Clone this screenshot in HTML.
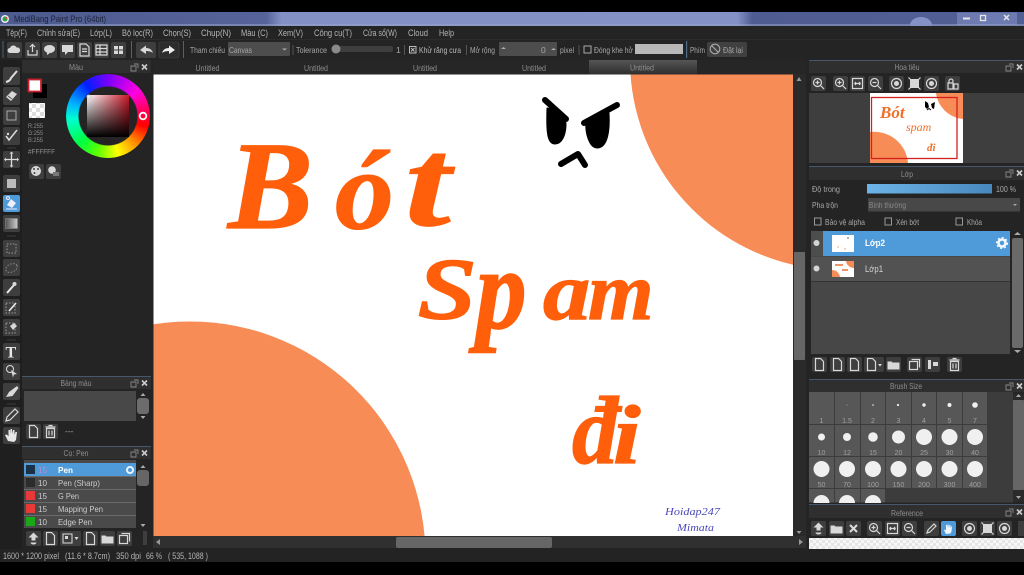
<!DOCTYPE html>
<html><head><meta charset="utf-8">
<style>
html,body{margin:0;padding:0;background:#000;width:1024px;height:575px;overflow:hidden}
svg{display:block;position:absolute;left:0;top:0}
text{font-family:"Liberation Sans","Noto Sans CJK JP",sans-serif;font-size:8.5px;fill:#a8a8a8}
.m text{fill:#b4b4b4;font-size:8.8px}
.hd{fill:#8e8e8e;text-anchor:middle}
.ink text{font-family:"Liberation Serif",serif;font-style:italic;font-weight:bold;fill:#ff5f0a;stroke:#ff5f0a;stroke-width:1.2}
.b{fill:#3e3e3e}
.ic{fill:#d8d8d8}
.st{fill:none;stroke:#d8d8d8;stroke-width:1.2}
.lb{fill:#a0a0a0;font-size:7px;text-anchor:middle}
.s{font-size:8.8px;fill:#b4b4b4}
#wheel{position:absolute;left:66px;top:74px;width:84px;height:84px;border-radius:50%;
background:conic-gradient(#7a00ff 0deg,#ff00e0 50deg,#ff0060 80deg,#ff0000 105deg,#ff9000 135deg,#ffff00 165deg,#60ff00 195deg,#00ff40 225deg,#00ffd0 265deg,#00b0ff 290deg,#0020ff 325deg,#7a00ff 360deg);
-webkit-mask:radial-gradient(circle,transparent 29px,#000 30px);mask:radial-gradient(circle,transparent 29px,#000 30px)}
#sq{position:absolute;left:87px;top:95px;width:42px;height:42px;background:linear-gradient(to bottom,rgba(0,0,0,0),#000),linear-gradient(to right,#fff,#c81828)}
</style></head><body>
<svg width="1024" height="575" viewBox="0 0 1024 575" xmlns="http://www.w3.org/2000/svg">
<defs>
<linearGradient id="tb" x1="0" x2="1" y1="0" y2="0"><stop offset="0" stop-color="#4e5b8e"/><stop offset=".26" stop-color="#56639a"/><stop offset=".275" stop-color="#8290c6"/><stop offset=".72" stop-color="#8391c6"/><stop offset=".735" stop-color="#4f5c92"/><stop offset="1" stop-color="#525f94"/></linearGradient>
<linearGradient id="bar" x1="0" x2="1" y1="0" y2="0"><stop offset="0" stop-color="#6cb4e8"/><stop offset="1" stop-color="#4888bd"/></linearGradient>
<linearGradient id="tabg" x1="0" x2="0" y1="0" y2="1"><stop offset="0" stop-color="#555"/><stop offset="1" stop-color="#2e2e2e"/></linearGradient>
<linearGradient id="grad" x1="0" x2="1" y1="0" y2="0"><stop offset="0" stop-color="#555"/><stop offset="1" stop-color="#ccc"/></linearGradient>
<pattern id="chk" width="8" height="8" patternUnits="userSpaceOnUse"><rect width="8" height="8" fill="#fff"/><rect width="4" height="4" fill="#ddd"/><rect x="4" y="4" width="4" height="4" fill="#ddd"/></pattern>
<pattern id="chk2" width="6" height="6" patternUnits="userSpaceOnUse"><rect width="6" height="6" fill="#f6f6f6"/><rect width="3" height="3" fill="#e6e6e6"/><rect x="3" y="3" width="3" height="3" fill="#e6e6e6"/></pattern>
<g id="doc"><path d="M4 2h5l3 3v9H4z" class="st"/></g>
<g id="folder"><path d="M2 5h4l1 1h7v7H2z" class="ic"/></g>
<g id="zoomi"><circle cx="7" cy="7" r="4" class="st"/><path d="M10 10l3.500 3.500M5 7h4M7 5v4" class="st"/></g>
<g id="zoomo"><circle cx="7" cy="7" r="4" class="st"/><path d="M10 10l3.500 3.500M5 7h4" class="st"/></g>
<g id="fit"><rect x="3" y="3" width="10" height="10" class="st"/><path d="M5 8h6M5 8l1.500-1.500M5 8l1.500 1.500M11 8l-1.500-1.500M11 8l-1.500 1.500" class="st"/></g>
<g id="rot"><circle cx="8" cy="8" r="5" class="st" stroke-width="1.800"/><circle cx="8" cy="8" r="2.500" class="ic"/></g>
<g id="full"><rect x="3.500" y="3.500" width="9" height="9" class="ic"/><path d="M2 2l3 3M14 2l-3 3M2 14l3-3M14 14l-3-3" class="st"/></g>
<g id="trash"><path d="M4 5h8v9H4zM3 3.500h10M6 2h4" class="st"/><path d="M6.500 7v5M9.500 7v5" class="st"/></g>
<g id="x"><path d="M4.500 4.500l7 7M11.500 4.500l-7 7" stroke="#ddd" stroke-width="2"/></g>
<g id="close"><path d="M0 0l5 5M5 0l-5 5" stroke="#ccc" stroke-width="1.600"/></g>
<g id="pop"><path d="M0 2h5v5h-5z M3 0h4v4" fill="none" stroke="#888" stroke-width=".9"/></g>
<g id="up"><path d="M8 2l5 5h-3v3h-4V7H3zM5 12a3 2 0 0 0 6 0z" class="ic"/></g>
<g id="copy"><rect x="3" y="5" width="8" height="8" class="st"/><path d="M5 3h8v8" class="st"/></g>
</defs>

<rect width="1024" height="575" fill="#000"/>
<rect y="12" width="1024" height="14" fill="url(#tb)"/>
<rect y="24.500" width="1024" height="1" fill="#9aa6cf"/>
<ellipse cx="921" cy="25" rx="11" ry="8" fill="#8391c6"/>
<rect x="957" y="12.500" width="60" height="12" fill="#6d7bb0"/>
<rect y="26" width="1024" height="523" fill="#242424"/>
<rect y="549" width="1024" height="13" fill="#232323"/>
<rect y="562" width="1024" height="13" fill="#000"/>

<!-- title -->
<circle cx="5" cy="19" r="4" fill="#e8e8e8"/><circle cx="5" cy="19" r="2.500" fill="#2f9d50"/><path d="M5 16.500a2.500 2.500 0 0 1 2.500 2.500H5z" fill="#e05030"/>
<text x="14" y="22" textLength="92" lengthAdjust="spacingAndGlyphs" style="font-size:9.300px;fill:#1d2238">MediBang Paint Pro (64bit)</text>
<rect x="963" y="17.500" width="7" height="2" fill="#e6e6e6"/>
<rect x="980.500" y="15.500" width="5" height="5" fill="none" stroke="#e6e6e6" stroke-width="1.300"/>
<path d="M1004 15l5 5M1009 15l-5 5" stroke="#e6e6e6" stroke-width="1.500"/>

<!-- menu -->
<g class="m">
<text x="6" y="36" textLength="21" lengthAdjust="spacingAndGlyphs">Tệp(F)</text>
<text x="37" y="36" textLength="43" lengthAdjust="spacingAndGlyphs">Chỉnh sửa(E)</text>
<text x="90" y="36" textLength="22" lengthAdjust="spacingAndGlyphs">Lớp(L)</text>
<text x="122" y="36" textLength="31" lengthAdjust="spacingAndGlyphs">Bộ lọc(R)</text>
<text x="163" y="36" textLength="28" lengthAdjust="spacingAndGlyphs">Chọn(S)</text>
<text x="201" y="36" textLength="30" lengthAdjust="spacingAndGlyphs">Chụp(N)</text>
<text x="241" y="36" textLength="27" lengthAdjust="spacingAndGlyphs">Màu (C)</text>
<text x="278" y="36" textLength="25" lengthAdjust="spacingAndGlyphs">Xem(V)</text>
<text x="314" y="36" textLength="38" lengthAdjust="spacingAndGlyphs">Công cụ(T)</text>
<text x="363" y="36" textLength="34" lengthAdjust="spacingAndGlyphs">Cửa sổ(W)</text>
<text x="408" y="36" textLength="20" lengthAdjust="spacingAndGlyphs">Cloud</text>
<text x="439" y="36" textLength="15" lengthAdjust="spacingAndGlyphs">Help</text>
</g>
<rect y="39" width="1024" height="1" fill="#2c2c2c"/>

<!-- toolbar -->
<rect x="2.500" y="41" width="1" height="17" fill="#4a6478"/>
<g>
<rect class="b" x="7" y="42" width="15" height="16" rx="2"/><path d="M10 53a2.500 2.500 0 0 1 0-5 3.500 3.500 0 0 1 6.500-.5 2.800 2.800 0 0 1 1.500 5.500z" class="ic"/>
<rect class="b" x="25" y="42" width="15" height="16" rx="2"/><path d="M28 50v5h9v-5M32.500 52v-7M30 47l2.500-2.500L35 47" class="st"/>
<rect class="b" x="42" y="42" width="15" height="16" rx="2"/><ellipse cx="49.500" cy="49" rx="5.500" ry="4" class="ic"/><path d="M47 52v3l3-2z" class="ic"/>
<rect class="b" x="60" y="42" width="15" height="16" rx="2"/><rect x="62" y="45" width="11" height="7" class="ic"/><path d="M65 52v3l3-3z" class="ic"/>
<rect class="b" x="77" y="42" width="15" height="16" rx="2"/><path d="M80 44h6l3 3v9h-9zM82 49h5M82 51.500h5" class="st"/>
<rect class="b" x="94" y="42" width="15" height="16" rx="2"/><path d="M96 45h11v10H96zM96 48.500h11M96 52h11M100 45v10" class="st"/>
<rect class="b" x="111" y="42" width="15" height="16" rx="2"/><rect x="114" y="46" width="4" height="3.500" class="ic"/><rect x="119" y="46" width="4" height="3.500" class="ic"/><rect x="114" y="50.500" width="4" height="3.500" class="ic"/><rect x="119" y="50.500" width="4" height="3.500" class="ic"/>
</g>
<rect x="131" y="41" width="1" height="17" fill="#4a6478"/>
<rect class="b" x="136" y="42" width="20" height="16" rx="2"/><path d="M140 50l6-4.500v2.500c4 0 6 2 7 5-2-1.500-4-2-7-2v3z" class="ic"/>
<rect x="159" y="42" width="20" height="16" rx="2" fill="#2d2d2d" stroke="#444" stroke-width=".6"/><path d="M175 50l-6-4.500v2.500c-4 0-6 2-7 5 2-1.500 4-2 7-2v3z" fill="#eee"/>
<rect x="183" y="41" width="1" height="17" fill="#4a6478"/>
<text x="190" y="53" textLength="35" lengthAdjust="spacingAndGlyphs">Tham chiếu</text>
<rect x="228" y="42" width="62" height="14" fill="#4d4d4d" rx="1"/><text x="229" y="53" textLength="23" lengthAdjust="spacingAndGlyphs">Canvas</text><path d="M282 48.500h5l-2.500 2z" fill="#aaa"/>
<rect x="292.500" y="45" width="1" height="10" fill="#555"/>
<text x="296" y="53" textLength="31" lengthAdjust="spacingAndGlyphs">Tolerance</text>
<rect x="332" y="46" width="61" height="6" fill="#3e3e3e" rx="2"/><circle cx="336" cy="49" r="4.500" fill="#8a8a8a"/>
<text x="396" y="53">1</text>
<rect x="404" y="45" width="1" height="10" fill="#555"/>
<rect x="409.500" y="46.500" width="6.500" height="6.500" fill="none" stroke="#bbb"/><path d="M411 48l3.500 3.500M414.500 48L411 51.500" stroke="#bbb"/>
<text x="419" y="53" textLength="42" lengthAdjust="spacingAndGlyphs" style="fill:#bbb">Khử răng cưa</text>
<rect x="466" y="45" width="1" height="10" fill="#555"/>
<text x="470" y="53" textLength="25" lengthAdjust="spacingAndGlyphs">Mở rộng</text>
<rect x="499" y="42" width="58" height="14" fill="#4d4d4d" rx="1"/><text x="541" y="53">0</text><path d="M501 49h5l-2.500-2z M551 50h5l-2.500-2z" fill="#aaa"/>
<text x="560" y="53" textLength="14" lengthAdjust="spacingAndGlyphs">pixel</text>
<rect x="578.500" y="45" width="1" height="10" fill="#555"/>
<rect x="584" y="46" width="7" height="7" fill="none" stroke="#aaa"/>
<text x="594" y="53" textLength="39" lengthAdjust="spacingAndGlyphs">Đóng khe hở</text>
<rect x="635" y="44" width="48" height="10" fill="#b8b8b8"/>
<rect x="686" y="41" width="1.200" height="17" fill="#4a6c88"/>
<text x="690" y="53" textLength="15" lengthAdjust="spacingAndGlyphs">Phím</text>
<rect x="707" y="42" width="40" height="15" fill="#404040" rx="2"/><circle cx="715" cy="49" r="4.800" fill="none" stroke="#aaa" stroke-width="1.100"/><path d="M711.500 45.500l7 7" stroke="#aaa" stroke-width="1.100"/><text x="723" y="53" textLength="20" lengthAdjust="spacingAndGlyphs">Đặt lại</text>

<!-- left tools -->
<rect x="0" y="60" width="22" height="489" fill="#1f1f1f"/>
<g>
<rect class="b" x="3" y="67" width="17" height="18" rx="2"/><path d="M6 82q4-1 5-4l6-7" stroke="#ddd" stroke-width="2" fill="none"/>
<rect class="b" x="3" y="87" width="17" height="18" rx="2"/><path d="M6 97l6-6 5 3-6 7z" class="ic"/><path d="M8 96l4 3" stroke="#555"/>
<rect class="b" x="3" y="107" width="17" height="18" rx="2"/><rect x="7" y="111" width="9" height="9" fill="none" stroke="#aaa"/>
<rect class="b" x="3" y="127" width="17" height="18" rx="2"/><path d="M6 136l3 4 8-10" stroke="#ddd" stroke-width="1.500" fill="none"/><circle cx="8" cy="134" r="1.200" class="ic"/>
<rect class="b" x="3" y="151" width="17" height="17" rx="2"/><path d="M11.500 152.500v14M5 159.500h13" stroke="#ddd" stroke-width="1.300"/><path d="M11.500 151.500l-2 2h4zM11.500 167.500l-2-2h4zM4 159.500l2-2v4zM19 159.500l-2-2v4z" class="ic"/>
<rect class="b" x="3" y="175" width="17" height="17" rx="2"/><rect x="7" y="179" width="9" height="9" fill="#bbb"/>
<rect x="3" y="195" width="17" height="17" rx="2" fill="#4f9ad8"/><path d="M7 205l4-6 5 4-4 5z" fill="#eef"/><circle cx="8" cy="198" r="1.500" fill="none" stroke="#eef"/><path d="M6 209h11" stroke="#eef"/>
<rect class="b" x="3" y="215" width="17" height="17" rx="2"/><rect x="5.500" y="218.500" width="12" height="10" fill="url(#grad)" stroke="#888" stroke-width=".6"/>
<rect class="b" x="3" y="240" width="17" height="17" rx="2"/><rect x="7" y="244" width="9" height="9" fill="none" stroke="#999" stroke-dasharray="1.500 1.500"/>
<rect class="b" x="3" y="259" width="17" height="17" rx="2"/><ellipse cx="11.500" cy="268" rx="6" ry="4" fill="none" stroke="#888" stroke-dasharray="1.500 1.500" transform="rotate(-25 11.500 268)"/>
<rect class="b" x="3" y="279" width="17" height="17" rx="2"/><path d="M7 293l7-8" stroke="#e6e6e6" stroke-width="2"/><circle cx="14.500" cy="284" r="2" class="ic"/>
<rect class="b" x="3" y="299" width="17" height="17" rx="2"/><rect x="6" y="303" width="9" height="10" fill="none" stroke="#999" stroke-dasharray="1.500 1.500"/><path d="M9 311l7-8" stroke="#eee" stroke-width="1.600"/>
<rect class="b" x="3" y="319" width="17" height="17" rx="2"/><rect x="6" y="323" width="9" height="10" fill="none" stroke="#999" stroke-dasharray="1.500 1.500"/><path d="M10 326l4-3 3 3-4 4z" class="ic"/>
<rect class="b" x="3" y="343" width="17" height="17" rx="2"/><text x="5.500" y="357.500" style="font-family:'Liberation Serif',serif;font-weight:bold;font-size:16px;fill:#e6e6e6">T</text>
<rect class="b" x="3" y="363" width="17" height="17" rx="2"/><circle cx="10" cy="369" r="3.500" fill="none" stroke="#ddd"/><path d="M11 370l6 4-3 .5-1 3z" class="ic"/>
<rect class="b" x="3" y="383" width="17" height="17" rx="2"/><path d="M6 397l3-5 8-6 1.500 2-6 8z" class="ic"/>
<rect class="b" x="3" y="407" width="17" height="17" rx="2"/><path d="M6 421l1-4 8-8 3 3-8 8z" fill="none" stroke="#ddd" stroke-width="1.200"/>
<rect class="b" x="3" y="427" width="17" height="17" rx="2"/><path d="M8 441l-3-6 2-.5 1.500 2V430h1.500v4l.5-5h1.500l.5 5 .5-4h1.500v5l1-3h1.500l-1 8-2 2z" fill="#e6e6e6"/>
</g>
<rect x="7" y="147.500" width="9" height="1" fill="#3b3b3b"/><rect x="7" y="235.500" width="9" height="1" fill="#3b3b3b"/><rect x="7" y="339.500" width="9" height="1" fill="#3b3b3b"/><rect x="7" y="403.500" width="9" height="1" fill="#3b3b3b"/>

<!-- left panel: colour -->
<rect x="22" y="60" width="129" height="13" fill="#2f2f2f"/><text class="hd" x="76" y="70" textLength="14" lengthAdjust="spacingAndGlyphs">Màu</text>
<use href="#pop" x="131" y="64"/><use href="#close" x="142" y="64.500"/>
<rect x="33" y="84" width="14" height="14" fill="#000"/>
<rect x="28.500" y="79.500" width="12.500" height="12" fill="#fff" stroke="#c8202c" stroke-width="1.800"/>
<rect x="29" y="103" width="16" height="15" fill="url(#chk)"/>
<text x="28" y="128" textLength="15" lengthAdjust="spacingAndGlyphs" style="font-size:6.800px;fill:#8e8e8e">R:255</text><text x="28" y="135" textLength="15" lengthAdjust="spacingAndGlyphs" style="font-size:6.800px;fill:#8e8e8e">G:255</text><text x="28" y="142" textLength="15" lengthAdjust="spacingAndGlyphs" style="font-size:6.800px;fill:#8e8e8e">B:255</text>
<text x="28" y="154" textLength="27" lengthAdjust="spacingAndGlyphs" style="font-size:7.500px;fill:#8e8e8e">#FFFFFF</text>
<rect class="b" x="29" y="164" width="15" height="15" rx="2"/><circle cx="36" cy="171" r="5" class="ic"/><circle cx="34" cy="169" r="1" fill="#444"/><circle cx="38" cy="169" r="1" fill="#444"/><circle cx="34.500" cy="173" r="1" fill="#444"/>
<rect class="b" x="46" y="164" width="15" height="15" rx="2"/><circle cx="52" cy="170" r="3.800" class="ic"/><rect x="53" y="172" width="6" height="4" fill="#777"/>

<!-- palette panel -->
<rect x="22" y="376" width="129" height="13" fill="#2f2f2f"/><rect x="22" y="376" width="129" height="1" fill="#46586a"/><text class="hd" x="76" y="386" textLength="31" lengthAdjust="spacingAndGlyphs">Bảng màu</text>
<use href="#pop" x="131" y="380"/><use href="#close" x="142" y="380.500"/>
<rect x="24" y="391" width="112" height="30" fill="#484848"/>
<rect x="137" y="398" width="12" height="16" rx="3" fill="#6c6c6c"/><path d="M140.500 396l2.500-3 2.500 3zM140.500 416l2.500 3 2.500-3z" fill="#aaa"/>
<rect class="b" x="26" y="424" width="15" height="15" rx="2"/><use href="#doc" x="25.500" y="423.500"/>
<rect class="b" x="43" y="424" width="15" height="15" rx="2"/><use href="#trash" x="42.500" y="423.500"/>
<text x="65" y="434">---</text>

<!-- brush panel -->
<rect x="22" y="446" width="129" height="13" fill="#2f2f2f"/><rect x="22" y="446" width="129" height="1" fill="#46586a"/><text class="hd" x="76" y="456" textLength="25" lengthAdjust="spacingAndGlyphs">Cọ: Pen</text>
<use href="#pop" x="131" y="450"/><use href="#close" x="142" y="450.500"/>
<rect x="24" y="460" width="112" height="68" fill="#4a4a4a"/>
<rect x="24" y="463" width="112" height="13" fill="#4f9ad8"/>
<rect x="24" y="476" width="112" height="1" fill="#6a6a6a"/><rect x="24" y="489" width="112" height="1" fill="#6a6a6a"/><rect x="24" y="502" width="112" height="1" fill="#6a6a6a"/><rect x="24" y="515" width="112" height="1" fill="#6a6a6a"/>
<rect x="26" y="465" width="9" height="9" fill="#1b3145"/><rect x="26" y="478" width="9" height="9" fill="#2c2c2c"/><rect x="26" y="491" width="9" height="9" fill="#e83838"/><rect x="26" y="504" width="9" height="9" fill="#e83838"/><rect x="26" y="517" width="9" height="9" fill="#18a818"/>
<text x="38" y="473" textLength="9" lengthAdjust="spacingAndGlyphs" style="fill:#c78ac8">15</text><text x="58" y="473" textLength="15" lengthAdjust="spacingAndGlyphs" style="fill:#fff;font-weight:bold">Pen</text>
<text x="38" y="486" textLength="9" lengthAdjust="spacingAndGlyphs" style="fill:#ccc">10</text><text x="58" y="486" textLength="42" lengthAdjust="spacingAndGlyphs" style="fill:#ccc">Pen (Sharp)</text>
<text x="38" y="499" textLength="9" lengthAdjust="spacingAndGlyphs" style="fill:#ccc">15</text><text x="58" y="499" textLength="21" lengthAdjust="spacingAndGlyphs" style="fill:#ccc">G Pen</text>
<text x="38" y="512" textLength="9" lengthAdjust="spacingAndGlyphs" style="fill:#ccc">15</text><text x="58" y="512" textLength="45" lengthAdjust="spacingAndGlyphs" style="fill:#ccc">Mapping Pen</text>
<text x="38" y="525" textLength="9" lengthAdjust="spacingAndGlyphs" style="fill:#ccc">10</text><text x="58" y="525" textLength="34" lengthAdjust="spacingAndGlyphs" style="fill:#ccc">Edge Pen</text>
<circle cx="130" cy="470" r="3" fill="none" stroke="#eaf4ff" stroke-width="2"/>
<rect x="137" y="470" width="12" height="16" rx="3" fill="#666"/><path d="M140.500 468l2.500-3 2.500 3zM140.500 524l2.500 3 2.500-3z" fill="#aaa"/>
<rect class="b" x="26" y="531" width="15" height="15" rx="2"/><use href="#up" x="25.500" y="530.500"/>
<rect class="b" x="43" y="531" width="15" height="15" rx="2"/><use href="#doc" x="42.500" y="530.500"/>
<rect class="b" x="60" y="531" width="21" height="15" rx="2"/><rect x="63" y="534" width="9" height="9" fill="none" stroke="#ddd"/><rect x="65" y="536" width="3" height="3" class="ic"/><path d="M74.500 537h4l-2 3z" class="ic"/>
<rect class="b" x="83" y="531" width="15" height="15" rx="2"/><use href="#doc" x="82.500" y="530.500"/>
<rect class="b" x="100" y="531" width="15" height="15" rx="2"/><use href="#folder" x="99.500" y="530.500"/>
<rect class="b" x="117" y="531" width="15" height="15" rx="2"/><use href="#copy" x="116.500" y="530.500"/>
<rect x="143" y="531" width="4" height="14" fill="#3e3e3e"/>

<!-- tabs -->
<rect x="153" y="60" width="653" height="14.500" fill="#262626"/>
<rect x="589" y="60" width="108" height="14.500" fill="url(#tabg)"/>
<text class="hd" x="207.500" y="71" textLength="24" lengthAdjust="spacingAndGlyphs">Untitled</text><text class="hd" x="316" y="71" textLength="24" lengthAdjust="spacingAndGlyphs">Untitled</text><text class="hd" x="425" y="71" textLength="24" lengthAdjust="spacingAndGlyphs">Untitled</text><text class="hd" x="534" y="71" textLength="24" lengthAdjust="spacingAndGlyphs">Untitled</text><text class="hd" x="642" y="70.500" textLength="24" lengthAdjust="spacingAndGlyphs">Untitled</text>

<!-- canvas -->
<rect x="153.500" y="74.500" width="639.500" height="461.500" fill="#fff"/>
<path d="M630.500 74.500A210 210 0 0 0 793 264.700L793 74.500Z" fill="#f88c56"/>
<path d="M153.500 324.300A235.500 235.500 0 0 1 424.600 536L153.500 536Z" fill="#f88c56"/>

<g class="ink">
<text transform="translate(228 228) scale(1.020 1)" style="font-size:125px">B</text>
<text transform="translate(335 228) scale(1.050 1)" style="font-size:112px">ó</text>
<text transform="translate(405 225) scale(1.300 1)" style="font-size:126px">t</text>
<text transform="translate(418 318) scale(1.800 1.450)" style="font-size:84px;font-weight:normal">s</text>
<text transform="translate(476 328) scale(1.150 1.300)" style="font-size:88px">p</text>
<text transform="translate(543 319) scale(1.100 .95)" style="font-size:86px">a</text>
<text transform="translate(588 319) scale(.98 .95)" style="font-size:86px">m</text>
<text transform="translate(572 463) scale(.96 1)" style="font-size:96px">đ</text>
<text transform="translate(613 463) scale(1.180 1)" style="font-size:84px">i</text>
</g>

<!-- angry face drawing -->
<g fill="#000" stroke="#000" stroke-linecap="round" stroke-linejoin="round">
<path d="M545 100L566 119" stroke-width="6" fill="none"/>
<path d="M547 108C553 108 566 118 566 124C566 135 562 144 555 144C548 144 546 135 547 108Z" stroke-width="1"/>
<path d="M617 105L584 123" stroke-width="6" fill="none"/>
<path d="M586 122L609 113C610 130 608 148 597 148C589 148 585 132 586 122Z" stroke-width="1"/>
<path d="M561 164L578 154 585 165" stroke-width="6" fill="none"/>
</g>

<text x="665" y="515" textLength="55" lengthAdjust="spacingAndGlyphs" style="font-family:'Liberation Serif',serif;font-style:italic;font-size:11px;fill:#4a4ab8">Hoidap247</text>
<text x="677" y="531" textLength="37" lengthAdjust="spacingAndGlyphs" style="font-family:'Liberation Serif',serif;font-style:italic;font-size:11px;fill:#4a4ab8">Mimata</text>

<!-- scrollbars -->
<rect x="793" y="74" width="13" height="462" fill="#2a2a2a"/>
<rect x="794" y="252" width="11" height="108" rx="1" fill="#666"/>
<path d="M796.500 81l2.500-4 2.500 4zM796.500 531l2.500 3 2.500-3z" fill="#999"/>
<rect x="153" y="536" width="653" height="12" fill="#303030"/>
<rect x="396" y="537" width="156" height="11" rx="2" fill="#666"/>
<path d="M160 539l-4 3 4 3zM799 539l4 3-4 3z" fill="#999"/>

<!-- right: navigator -->
<rect x="809" y="60" width="215" height="13" fill="#2f2f2f"/><rect x="809" y="60" width="215" height="1" fill="#46586a"/><text class="hd" x="907" y="70" textLength="25" lengthAdjust="spacingAndGlyphs">Hoa tiêu</text>
<use href="#pop" x="1006" y="64"/><use href="#close" x="1017" y="64.500"/>
<g>
<rect class="b" x="811" y="76" width="15" height="15" rx="2"/><use href="#zoomi" x="810.500" y="75.500"/>
<rect class="b" x="833" y="76" width="15" height="15" rx="2"/><use href="#zoomi" x="832.500" y="75.500"/>
<rect class="b" x="850" y="76" width="15" height="15" rx="2"/><use href="#fit" x="849.500" y="75.500"/>
<rect class="b" x="868" y="76" width="15" height="15" rx="2"/><use href="#zoomo" x="867.500" y="75.500"/>
<rect class="b" x="889" y="76" width="15" height="15" rx="2"/><use href="#rot" x="888.500" y="75.500"/>
<rect x="907" y="76" width="15" height="15" rx="2" fill="#2b2b2b"/><use href="#full" x="906.500" y="75.500"/>
<rect class="b" x="924" y="76" width="15" height="15" rx="2"/><use href="#rot" x="923.500" y="75.500"/>
<rect class="b" x="945" y="76" width="15" height="15" rx="2"/><path d="M948 83h5v6h-5zM954 84h4v5h-4zM949 83v-2a2 2 0 0 1 4 0v2" class="st"/>
</g>
<rect x="809" y="93" width="215" height="70" fill="#3e3e3e"/>
<rect x="870" y="93" width="93" height="70" fill="#fff"/>
<path d="M936 93A30 30 0 0 0 963 119V93Z" fill="#f88c56"/>
<path d="M870 132A34 34 0 0 1 908 163H870Z" fill="#f88c56"/>
<text x="880" y="118" style="font-family:'Liberation Serif',serif;font-style:italic;font-weight:bold;font-size:17px;fill:#f0702a">Bót</text>
<text x="906" y="131" style="font-family:'Liberation Serif',serif;font-style:italic;font-size:12px;fill:#f0702a">spam</text>
<text x="927" y="151" style="font-family:'Liberation Serif',serif;font-style:italic;font-weight:bold;font-size:11px;fill:#f0702a">đi</text>
<path d="M925 101l3 2 1 4-2 2-2-2zM935 102l-4 2 1 4 2 1z" fill="#000"/><path d="M927 110l2-1.500 2 1.500" stroke="#000" fill="none"/>
<rect x="871.500" y="97.500" width="85.500" height="61" fill="none" stroke="#d21f1f" stroke-width="1.300"/>

<!-- right: layers -->
<rect x="809" y="166" width="215" height="14" fill="#2f2f2f"/><rect x="809" y="166" width="215" height="1" fill="#46586a"/><text class="hd" x="907" y="177" textLength="12" lengthAdjust="spacingAndGlyphs">Lớp</text>
<use href="#pop" x="1006" y="170"/><use href="#close" x="1017" y="170.500"/>
<text x="812" y="192" textLength="28" lengthAdjust="spacingAndGlyphs">Độ trong</text>
<rect x="867" y="184" width="125" height="9.500" fill="url(#bar)"/>
<text x="996" y="192" textLength="20" lengthAdjust="spacingAndGlyphs">100 %</text>
<text x="812" y="208" textLength="26" lengthAdjust="spacingAndGlyphs">Pha trộn</text>
<rect x="868" y="198" width="152" height="13.500" fill="#484848" rx="1"/><text x="869" y="208" textLength="37" lengthAdjust="spacingAndGlyphs" style="fill:#8c8c8c">Bình thường</text><path d="M1013 204h4l-2 2z" fill="#aaa"/>
<rect x="814.500" y="218" width="6.500" height="7" fill="none" stroke="#999"/><text x="825" y="225" textLength="40" lengthAdjust="spacingAndGlyphs">Bảo vệ alpha</text>
<rect x="885" y="218" width="6.500" height="7" fill="none" stroke="#999"/><text x="896" y="225" textLength="23" lengthAdjust="spacingAndGlyphs">Xén bớt</text>
<rect x="956" y="218" width="6.500" height="7" fill="none" stroke="#999"/><text x="967" y="225" textLength="15" lengthAdjust="spacingAndGlyphs">Khóa</text>
<rect x="811" y="231" width="199" height="123" fill="#474747"/>
<rect x="823" y="231" width="187" height="25" fill="#4f9ad8"/>
<rect x="811" y="231" width="12" height="25" fill="#4d4d4d"/>
<rect x="811" y="257" width="199" height="24" fill="#525252"/>
<rect x="811" y="281" width="199" height="1" fill="#333"/>
<circle cx="816.500" cy="243" r="3" fill="#d4d4d4"/><circle cx="816.500" cy="268.500" r="3" fill="#d4d4d4"/>
<rect x="832" y="235" width="22" height="17" fill="#fff"/><circle cx="848" cy="238" r="1" fill="#999"/><circle cx="838" cy="247" r=".8" fill="#f4a070"/><circle cx="845" cy="249" r=".8" fill="#f4a070"/>
<rect x="832" y="261" width="22" height="16" fill="#fff"/><path d="M832 270A8 8 0 0 1 840 277H832Z" fill="#f88c56"/><path d="M846 261A8 8 0 0 0 854 268V261Z" fill="#f88c56"/><path d="M835 265h8M842 270h6" stroke="#e8703a" stroke-width="1.500"/>
<text x="865" y="246" textLength="20" lengthAdjust="spacingAndGlyphs" style="fill:#fff;font-weight:bold;font-size:8.800px">Lớp2</text>
<text x="865" y="272" textLength="18" lengthAdjust="spacingAndGlyphs" style="fill:#d4d4d4;font-size:8.800px">Lớp1</text>
<circle cx="1002" cy="243" r="3.500" fill="none" stroke="#f4f8ff" stroke-width="2.500"/><circle cx="1002" cy="243" r="5.200" fill="none" stroke="#f4f8ff" stroke-width="1.600" stroke-dasharray="2 2"/>
<rect x="1012" y="238" width="11" height="110" rx="2" fill="#6a6a6a"/><path d="M1014 235l3.500-3 3.500 3zM1014 350l3.500 3 3.500-3z" fill="#aaa"/>
<g>
<rect class="b" x="812" y="357" width="15" height="15" rx="2"/><use href="#doc" x="811.500" y="356.500"/>
<rect class="b" x="830" y="357" width="15" height="15" rx="2"/><use href="#doc" x="829.500" y="356.500"/>
<rect class="b" x="847" y="357" width="15" height="15" rx="2"/><use href="#doc" x="846.500" y="356.500"/>
<rect class="b" x="864" y="357" width="20" height="15" rx="2"/><use href="#doc" x="863.500" y="356.500"/><path d="M878 364h4l-2 2.500z" class="ic"/>
<rect class="b" x="886" y="357" width="15" height="15" rx="2"/><use href="#folder" x="885.500" y="356.500"/>
<rect class="b" x="907" y="357" width="15" height="15" rx="2"/><use href="#copy" x="906.500" y="356.500"/>
<rect class="b" x="925" y="357" width="15" height="15" rx="2"/><rect x="928" y="360" width="3" height="9" class="ic"/><rect x="933" y="362" width="5" height="4" class="ic"/>
<rect class="b" x="947" y="357" width="15" height="15" rx="2"/><use href="#trash" x="946.500" y="356.500"/>
</g>

<!-- right: brush size -->
<rect x="809" y="379" width="215" height="13" fill="#2f2f2f"/><rect x="809" y="379" width="215" height="1" fill="#46586a"/><text class="hd" x="906" y="389" textLength="32" lengthAdjust="spacingAndGlyphs">Brush Size</text>
<use href="#pop" x="1006" y="383"/><use href="#close" x="1017" y="383.500"/>
<rect x="809" y="392" width="204" height="110.500" fill="#3c3c3c"/>
<rect x="809" y="392" width="178" height="96" fill="#575757"/>
<rect x="809" y="488" width="76" height="14.500" fill="#575757"/>
<g fill="#3c3c3c">
<rect x="834" y="392" width="1" height="110"/><rect x="860" y="392" width="1" height="110"/><rect x="885" y="392" width="1" height="96"/><rect x="911" y="392" width="1" height="96"/><rect x="936" y="392" width="1" height="96"/><rect x="962" y="392" width="1" height="96"/>
<rect x="809" y="424" width="178" height="1"/><rect x="809" y="456" width="178" height="1"/><rect x="809" y="488" width="178" height="1"/>
</g>
<g fill="#f0f0f0">
<circle cx="847" cy="405" r=".4"/><circle cx="873" cy="405" r=".8"/><circle cx="898" cy="405" r="1.100"/><circle cx="924" cy="405" r="1.700"/><circle cx="949.500" cy="405" r="2"/><circle cx="975" cy="405" r="2.800"/>
<circle cx="821.500" cy="437" r="3.500"/><circle cx="847" cy="437" r="4"/><circle cx="873" cy="437" r="4.800"/><circle cx="898.500" cy="437" r="6.500"/><circle cx="924" cy="437" r="8"/><circle cx="949.500" cy="437" r="8"/><circle cx="975" cy="437" r="8"/>
<circle cx="821.500" cy="469" r="8"/><circle cx="847" cy="469" r="8"/><circle cx="873" cy="469" r="8"/><circle cx="898.500" cy="469" r="8"/><circle cx="924" cy="469" r="8"/><circle cx="949.500" cy="469" r="8"/><circle cx="975" cy="469" r="8"/>
<path d="M813.500 502a8 8 0 0 1 16 0zM839 502a8 8 0 0 1 16 0zM865 502a8 8 0 0 1 16 0z" transform="translate(0 1)"/>
</g>
<text class="lb" x="821.500" y="423">1</text><text class="lb" x="847" y="423">1.5</text><text class="lb" x="873" y="423">2</text><text class="lb" x="898.500" y="423">3</text><text class="lb" x="924" y="423">4</text><text class="lb" x="949.500" y="423">5</text><text class="lb" x="975" y="423">7</text>
<text class="lb" x="821.500" y="455">10</text><text class="lb" x="847" y="455">12</text><text class="lb" x="873" y="455">15</text><text class="lb" x="898.500" y="455">20</text><text class="lb" x="924" y="455">25</text><text class="lb" x="949.500" y="455">30</text><text class="lb" x="975" y="455">40</text>
<text class="lb" x="821.500" y="487">50</text><text class="lb" x="847" y="487">70</text><text class="lb" x="873" y="487">100</text><text class="lb" x="898.500" y="487">150</text><text class="lb" x="924" y="487">200</text><text class="lb" x="949.500" y="487">300</text><text class="lb" x="975" y="487">400</text>
<rect x="1013" y="394" width="11" height="108" fill="#2a2a2a"/><rect x="1013" y="400" width="11" height="90" rx="1" fill="#666"/><path d="M1016 397l2.500-3 2.500 3zM1016 496l2.500 3 2.500-3z" fill="#aaa"/>

<!-- right: reference -->
<rect x="809" y="504" width="215" height="14" fill="#2f2f2f"/><rect x="809" y="504" width="215" height="1" fill="#46586a"/><text class="hd" x="907" y="516" textLength="32" lengthAdjust="spacingAndGlyphs">Reference</text>
<use href="#pop" x="1006" y="509"/><use href="#close" x="1017" y="509.500"/>
<g>
<rect class="b" x="811" y="521" width="15" height="15" rx="2"/><use href="#up" x="810.500" y="520.500"/>
<rect class="b" x="829" y="521" width="15" height="15" rx="2"/><use href="#folder" x="828.500" y="520.500"/>
<rect class="b" x="846" y="521" width="15" height="15" rx="2"/><use href="#x" x="845.500" y="520.500"/>
<rect class="b" x="867" y="521" width="15" height="15" rx="2"/><use href="#zoomi" x="866.500" y="520.500"/>
<rect class="b" x="885" y="521" width="15" height="15" rx="2"/><use href="#fit" x="884.500" y="520.500"/>
<rect class="b" x="902" y="521" width="15" height="15" rx="2"/><use href="#zoomo" x="901.500" y="520.500"/>
<rect class="b" x="924" y="521" width="15" height="15" rx="2"/><path d="M927 533l1-3 6-6 2 2-6 6z" class="st"/>
<rect x="941" y="521" width="15" height="15" rx="2" fill="#4f9ad8"/><path d="M946 534l-2-4 1-.5 1 1V525h1v3l.5-3.500h1l.5 3.500.5-3h1v3.500l.5-2h1l-.5 5-1 2z" fill="#eef6ff"/>
<rect class="b" x="962" y="521" width="15" height="15" rx="2"/><use href="#rot" x="961.500" y="520.500"/>
<rect class="b" x="980" y="521" width="15" height="15" rx="2"/><use href="#full" x="979.500" y="520.500"/>
<rect class="b" x="997" y="521" width="15" height="15" rx="2"/><use href="#rot" x="996.500" y="520.500"/>
<rect x="1018" y="521" width="6" height="15" fill="#3e3e3e"/>
</g>
<rect x="809" y="538" width="215" height="11" fill="url(#chk2)"/>

<!-- status -->
<text class="s" x="3" y="559" textLength="56" lengthAdjust="spacingAndGlyphs">1600 * 1200 pixel</text>
<text class="s" x="65" y="559" textLength="45" lengthAdjust="spacingAndGlyphs">(11.6 * 8.7cm)</text>
<text class="s" x="116" y="559" textLength="25" lengthAdjust="spacingAndGlyphs">350 dpi</text>
<text class="s" x="146" y="559" textLength="16" lengthAdjust="spacingAndGlyphs">66 %</text>
<text class="s" x="168" y="559" textLength="40" lengthAdjust="spacingAndGlyphs">( 535, 1088 )</text>
</svg>
<div id="wheel"></div>
<div id="sq"></div>
<svg width="1024" height="575" style="pointer-events:none" xmlns="http://www.w3.org/2000/svg">
<circle cx="143" cy="116" r="3.300" fill="none" stroke="#fff" stroke-width="1.800"/>
<circle cx="89" cy="97" r="2" fill="none" stroke="#ccc" stroke-width=".8"/>
</svg>
</body></html>
